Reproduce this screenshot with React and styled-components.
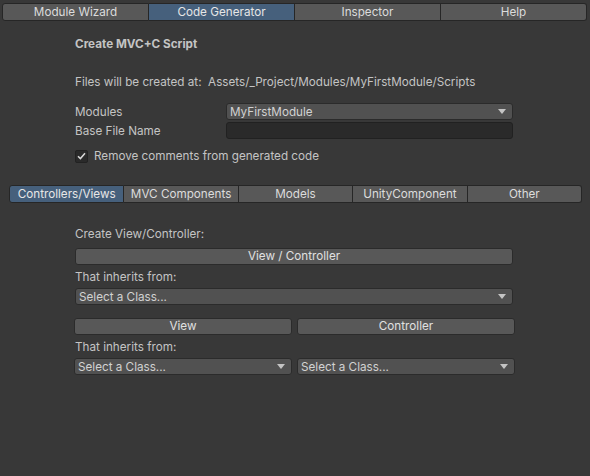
import React from 'react';
import styled, { createGlobalStyle } from 'styled-components';

const GlobalStyle = createGlobalStyle`
  html, body {
    margin: 0;
    padding: 0;
    background: #383838;
  }
  body {
    font-family: Inter, 'Noto Sans', 'Liberation Sans', sans-serif;
    font-size: 11.7px;
    color: #c4c4c4;
  }
`;

const Window = styled.div`
  width: 590px;
  height: 476px;
  background: #383838;
  overflow: hidden;
`;

const TabBar = styled.div`
  display: flex;
  padding: ${(p) => p.$pad};
  margin-top: ${(p) => p.$top}px;
`;

const Tab = styled.div`
  flex: 1;
  height: 16px;
  line-height: 16px;
  text-align: center;
  background: ${(p) => (p.$active ? '#46607c' : '#585858')};
  color: ${(p) => (p.$active ? '#e6e6e6' : '#dcdcdc')};
  border: 1px solid #262626;
  border-left-width: ${(p) => (p.$first ? 1 : 0)}px;
  white-space: nowrap;
  overflow: hidden;
  &:first-child {
    border-radius: 3px 0 0 3px;
  }
  &:last-child {
    border-radius: 0 3px 3px 0;
  }
`;

const Content = styled.div`
  width: 438px;
  margin-left: 75px;
  display: flex;
  flex-direction: column;
`;

const Title = styled.div`
  font-weight: 700;
  line-height: 16px;
  margin-top: ${(p) => p.$top}px;
`;

const Text = styled.div`
  line-height: 16px;
  margin-top: ${(p) => p.$top}px;
  white-space: nowrap;
`;

const FieldRow = styled.div`
  display: flex;
  align-items: center;
  height: 17px;
  margin-top: ${(p) => p.$top}px;
`;

const Label = styled.div`
  width: 151px;
  flex-shrink: 0;
`;

const Dropdown = styled.div`
  flex: 1;
  min-width: 0;
  box-sizing: border-box;
  height: 17px;
  display: flex;
  align-items: center;
  padding: 0 6px 0 3px;
  background: #515151;
  border: 1px solid #2b2b2b;
  border-radius: 3px;
  color: #d2d2d2;
  white-space: nowrap;
`;

const DropdownText = styled.span`
  flex: 1;
  overflow: hidden;
`;

const Arrow = styled.span`
  width: 0;
  height: 0;
  border-left: 4px solid transparent;
  border-right: 4px solid transparent;
  border-top: 5px solid #c4c4c4;
`;

const TextField = styled.div`
  flex: 1;
  box-sizing: border-box;
  height: 17px;
  background: #2a2a2a;
  border: 1px solid #212121;
  border-radius: 3px;
`;

const CheckRow = styled.label`
  display: flex;
  align-items: center;
  gap: 6px;
  height: 16px;
  margin-top: 9px;
`;

const CheckBox = styled.span`
  width: 13px;
  height: 13px;
  box-sizing: border-box;
  background: #2a2a2a;
  border: 1px solid #222;
  border-radius: 2px;
  display: flex;
  align-items: center;
  justify-content: center;
`;

const Button = styled.div`
  flex: 1;
  box-sizing: border-box;
  height: 17px;
  line-height: 15px;
  text-align: center;
  background: #585858;
  border: 1px solid #2b2b2b;
  border-radius: 3px;
  color: #e0e0e0;
`;

const Pair = styled.div`
  display: flex;
  gap: 5px;
  margin: ${(p) => p.$top}px -2px 0 -1px;
`;

const Half = styled.div`
  flex: 1;
  display: flex;
`;

const SelectClass = () => (
  <Dropdown>
    <DropdownText>Select a Class...</DropdownText>
    <Arrow />
  </Dropdown>
);

const topTabs = ['Module Wizard', 'Code Generator', 'Inspector', 'Help'];
const subTabs = ['Controllers/Views', 'MVC Components', 'Models', 'UnityComponent', 'Other'];

export default function App() {
  return (
    <Window>
      <GlobalStyle />
      <TabBar $pad="0 3px 0 2px" $top={3}>
        {topTabs.map((t, i) => (
          <Tab key={t} $first={i === 0} $active={t === 'Code Generator'}>
            {t}
          </Tab>
        ))}
      </TabBar>

      <Content>
        <Title $top={15}>Create MVC+C Script</Title>
        <Text $top={22}>Files will be created at:&nbsp; Assets/_Project/Modules/MyFirstModule/Scripts</Text>
        <FieldRow $top={13}>
          <Label>Modules</Label>
          <Dropdown>
            <DropdownText>MyFirstModule</DropdownText>
            <Arrow />
          </Dropdown>
        </FieldRow>
        <FieldRow $top={2}>
          <Label>Base File Name</Label>
          <TextField />
        </FieldRow>
        <CheckRow>
          <CheckBox>
            <svg width="9" height="8" viewBox="0 0 9 8">
              <path d="M1 4.2 L3.4 6.6 L8 1.2" fill="none" stroke="#d8d8d8" strokeWidth="1.5" />
            </svg>
          </CheckBox>
          Remove comments from generated code
        </CheckRow>
      </Content>

      <TabBar $pad="0 8px 0 9px" $top={21}>
        {subTabs.map((t, i) => (
          <Tab key={t} $first={i === 0} $active={t === 'Controllers/Views'}>
            {t}
          </Tab>
        ))}
      </TabBar>

      <Content>
        <Text $top={23}>Create View/Controller:</Text>
        <FieldRow $top={6}>
          <Button>View / Controller</Button>
        </FieldRow>
        <Text $top={4}>That inherits from:</Text>
        <FieldRow $top={3}>
          <SelectClass />
        </FieldRow>
        <Pair $top={13}>
          <Half><Button>View</Button></Half>
          <Half><Button>Controller</Button></Half>
        </Pair>
        <Text $top={4}>That inherits from:</Text>
        <Pair $top={3}>
          <Half><SelectClass /></Half>
          <Half><SelectClass /></Half>
        </Pair>
      </Content>
    </Window>
  );
}
